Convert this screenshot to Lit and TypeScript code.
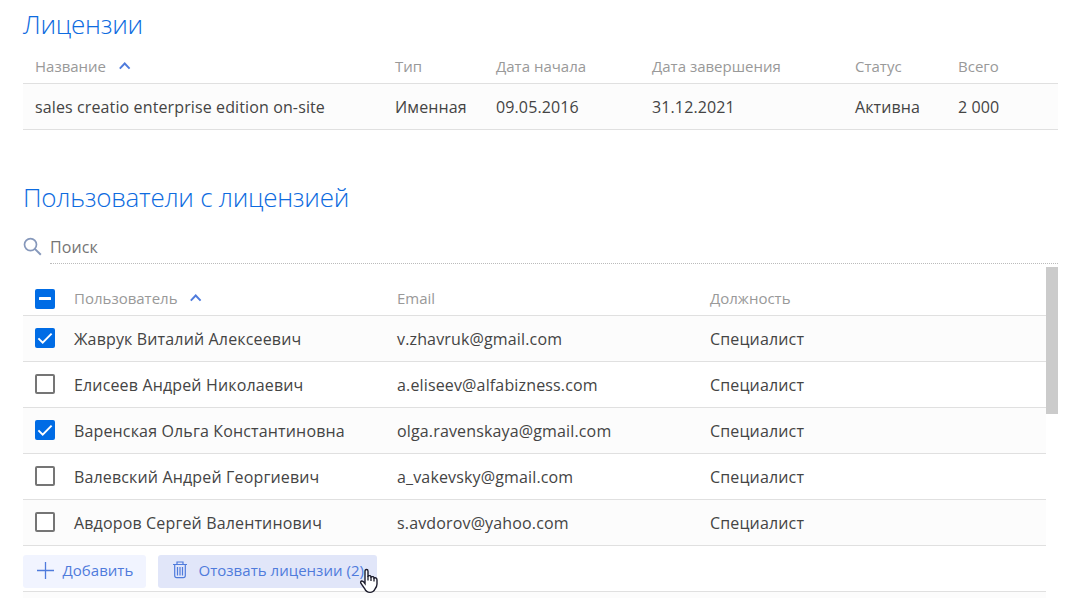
import { LitElement, html, css, svg } from "lit";
import { customElement, property } from "lit/decorators.js";

type CheckState = "on" | "off" | "mixed";

@customElement("check-box")
class CheckBox extends LitElement {
  @property() state: CheckState = "off";

  static styles = css`
    :host { display: block; width: 20px; height: 20px; }
    .box { box-sizing: border-box; width: 20px; height: 20px; border-radius: 2px; border: 2px solid #757575; background: #fff; }
    .filled { border: 0; background: #006ce5; }
    svg { display: block; }
  `;

  render() {
    if (this.state === "off") return html`<div class="box"></div>`;
    const mark = this.state === "on"
      ? svg`<path d="M3.4 10.4L7.7 14.7L16.6 5.6" fill="none" stroke="#fff" stroke-width="1.9"/>`
      : svg`<rect x="4" y="8" width="12" height="3" rx="0.6" fill="#fff"/>`;
    return html`<div class="box filled"><svg width="20" height="20">${mark}</svg></div>`;
  }
}

const LICENSE_HEAD = ["Название", "Тип", "Дата начала", "Дата завершения", "Статус", "Всего"];
const LICENSE_ROW = ["sales creatio enterprise edition on-site", "Именная", "09.05.2016", "31.12.2021", "Активна", "2 000"];

const USERS: { name: string; email: string; state: CheckState }[] = [
  { name: "Жаврук Виталий Алексеевич", email: "v.zhavruk@gmail.com", state: "on" },
  { name: "Елисеев Андрей Николаевич", email: "a.eliseev@alfabizness.com", state: "off" },
  { name: "Варенская Ольга Константиновна", email: "olga.ravenskaya@gmail.com", state: "on" },
  { name: "Валевский Андрей Георгиевич", email: "a_vakevsky@gmail.com", state: "off" },
  { name: "Авдоров Сергей Валентинович", email: "s.avdorov@yahoo.com", state: "off" },
];

const sortIcon = html`<svg class="sort" width="12" height="8" viewBox="0 0 12 8"><path d="M0.8 6.7L5.7 1.5L10.6 6.7" fill="none" stroke="#4f7bdc" stroke-width="1.9"/></svg>`;

@customElement("app-root")
class AppRoot extends LitElement {
  static styles = css`
    :host { display: block; width: 1082px; height: 598px; overflow: hidden; position: relative; background: #fff; color: #444; font: 16px/22px "Open Sans", sans-serif; letter-spacing: 0.12px; white-space: nowrap; }
    .page { display: flex; flex-direction: column; margin-left: 23px; width: 1035px; }
    h1 { margin: 0; font-weight: 300; font-size: 26px; line-height: 36px; letter-spacing: -0.27px; color: #0d6be0; }
    .first { box-sizing: border-box; padding-top: 6px; height: 50px; }
    .second { margin-top: 49px; height: 37px; }
    .row { display: grid; align-items: center; box-sizing: border-box; height: 46px; padding-left: 12px; border-bottom: 1px solid #e0e0e0; }
    .head { color: #999; font-size: 15px; letter-spacing: 0; }
    .lic { grid-template-columns: 360px 101px 156px 203px 103px 1fr; }
    .lic.head { height: 34px; padding-bottom: 2px; }
    .usr { grid-template-columns: 39px 323px 313px 1fr; letter-spacing: 0.15px; }
    .usr.head { height: 52px; padding-top: 16px; letter-spacing: 0; }
    .table .usr.head check-box { margin-top: 2px; }
    .shade { background: #fcfcfc; }
    .sort { margin-left: 13px; vertical-align: 2px; }
    .usr .sort { margin-left: 12px; }
    .search { display: flex; margin-top: 16px; height: 32px; color: #757575; }
    .search svg { flex: none; margin: 5px 7px 0 0; }
    .field { flex: 1; box-sizing: border-box; height: 32px; padding-top: 4px; border-bottom: 1px dotted #bbb; }
    .list { display: flex; height: 334px; align-items: flex-start; }
    .table { width: 1023px; }
    .thumb { width: 12px; height: 147px; margin-top: 3px; background: #cbcbcb; }
    .table .row check-box { margin-top: -1px; }
    .actions { display: flex; gap: 12px; box-sizing: border-box; height: 46px; padding-top: 9px; border-bottom: 1px solid #e0e0e0; }
    .btn { display: flex; box-sizing: border-box; height: 33px; border-radius: 3px; background: #f1f4ff; color: #4f7bdc; font-size: 15px; letter-spacing: 0.03px; line-height: 30px; }
    .add { width: 123px; padding-left: 14px; }
    .add svg { margin: 7px 8.5px 0 0; }
    .revoke { width: 219px; padding-left: 15px; background: #e1e6f9; }
    .revoke svg { margin: 6px 11.5px 0 0; }
    .cursor { position: absolute; left: 358.5px; top: 568px; }
  `;

  render() {
    return html`
      <div class="page">
        <h1 class="first">Лицензии</h1>
        <div class="row lic head">${LICENSE_HEAD.map((t, i) => html`<span>${t}${i === 0 ? sortIcon : ""}</span>`)}</div>
        <div class="row lic shade">${LICENSE_ROW.map((t) => html`<span>${t}</span>`)}</div>
        <h1 class="second">Пользователи с лицензией</h1>
        <div class="search">
          <svg width="20" height="20" viewBox="0 0 20 20" fill="none" stroke="#8698bb"><circle cx="7.5" cy="7.6" r="6" stroke-width="1.7"/><path d="M11.8 11.9L17.8 17.8" stroke-width="2"/></svg>
          <div class="field">Поиск</div>
        </div>
        <div class="list">
          <div class="table">
            <div class="row usr head">
              <check-box state="mixed"></check-box><span>Пользователь${sortIcon}</span><span>Email</span><span>Должность</span>
            </div>
            ${USERS.map((u, i) => html`
              <div class="row usr ${i % 2 ? "" : "shade"}">
                <check-box state=${u.state}></check-box><span>${u.name}</span><span>${u.email}</span><span>Специалист</span>
              </div>`)}
            <div class="actions">
              <div class="btn add">
                <svg width="17" height="17" viewBox="0 0 17 17"><path d="M8.5 0V17M0 8.5H17" stroke="#4f7bdc" stroke-width="1.3"/></svg>
                <span>Добавить</span>
              </div>
              <div class="btn revoke">
                <svg width="14" height="18" viewBox="0 0 14 18" fill="none" stroke="#4f7bdc" stroke-width="1.2"><path d="M0 3.5H14M4 3.5V1H10V3.5M1.7 3.5V14.5Q1.7 16.6 3.7 16.6H10.3Q12.3 16.6 12.3 14.5V3.5M4.5 6V14.5M7 6V14.5M9.5 6V14.5"/></svg>
                <span>Отозвать лицензии (2)</span>
              </div>
            </div>
            <div class="row usr shade"></div>
          </div>
          <div class="thumb"></div>
        </div>
      </div>
      <svg class="cursor" width="20" height="26" viewBox="0 0 20 26"><path d="M6 15.5V3.2Q6 1.5 7.5 1.5T9 3.2V8Q11.7 6.8 12 9Q14.7 7.8 15 10Q17.9 9.1 18 12V16Q18 18.5 16 21Q14.5 24.4 11 24.4Q7.2 24.4 5.6 20.5L2 15.5Q1 13.5 2.7 13Q4.1 12.7 6 15.5Z" fill="#fff" stroke="#1c1c2c" stroke-width="1.4"/><path d="M9 8V12.5M12 9V13M15 10V13.5" stroke="#1c1c2c" stroke-width="1.3"/></svg>
    `;
  }
}
